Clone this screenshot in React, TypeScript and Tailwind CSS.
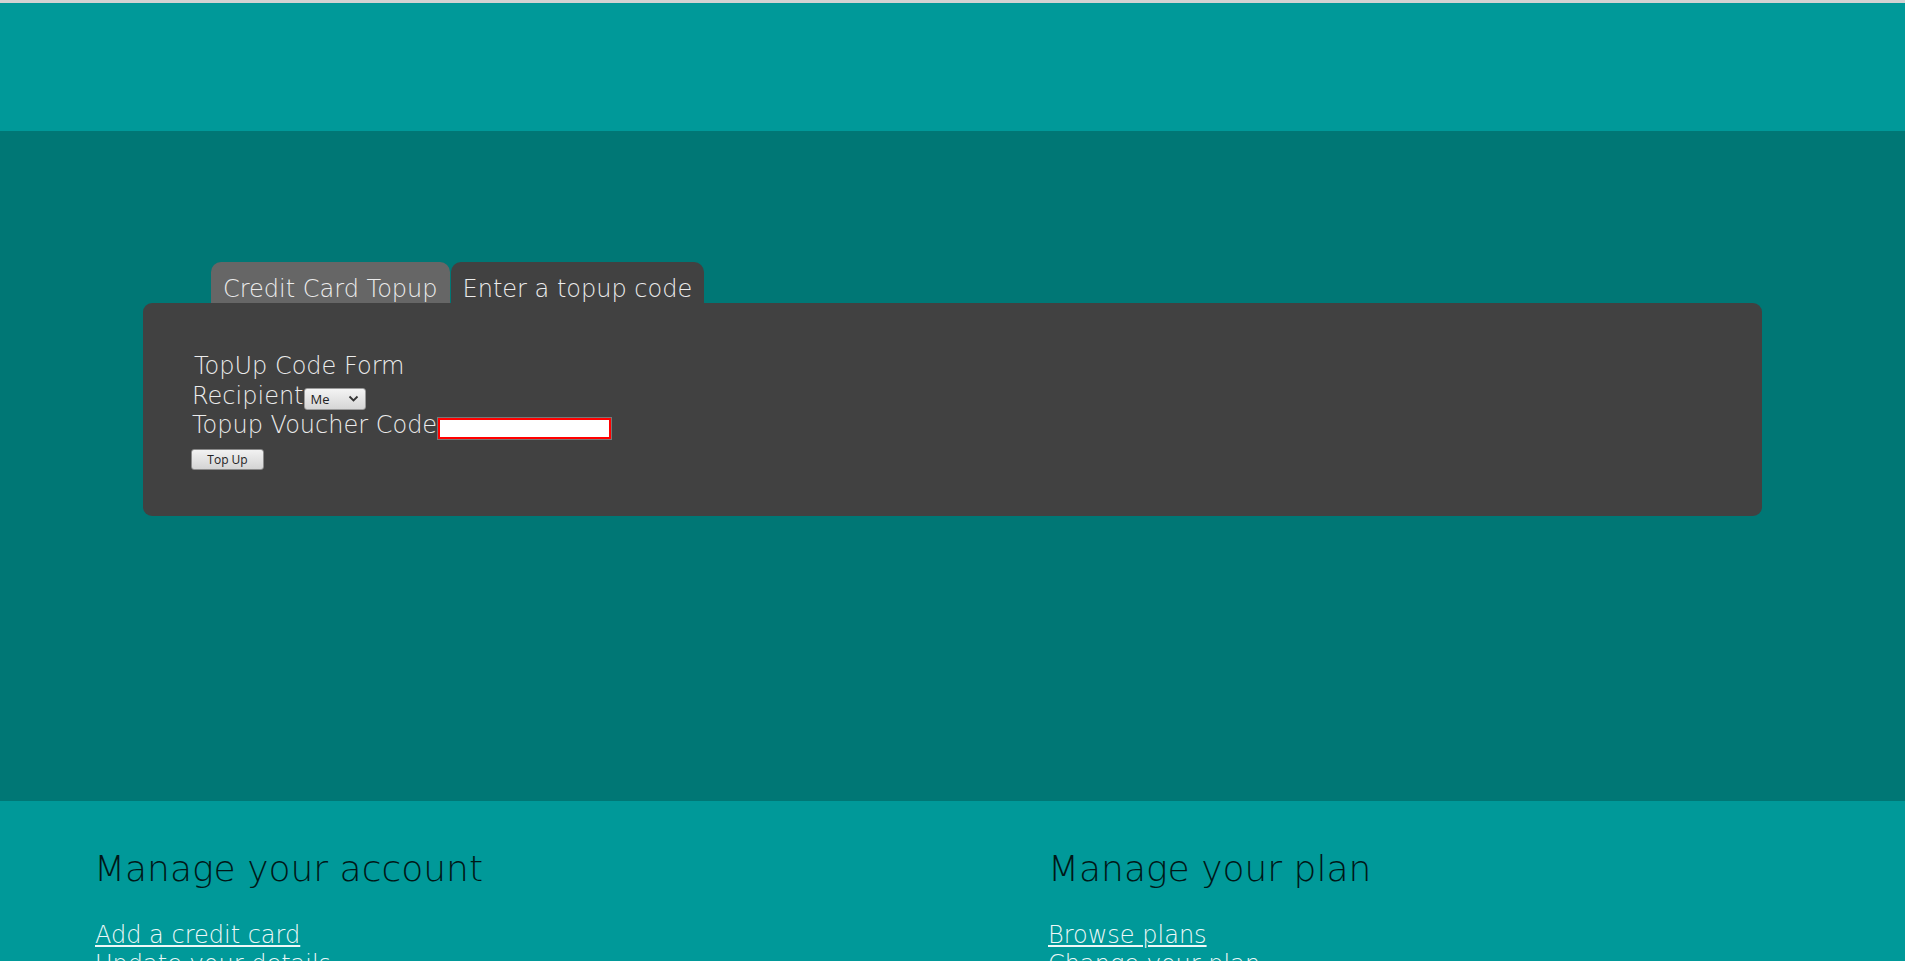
import React from "react";

export default function App() {
  const font = { fontFamily: '"DejaVu Sans", "Liberation Sans", sans-serif' };
  const ctrlFont = { fontFamily: '"Open Sans", "Liberation Sans", sans-serif' };
  return (
    <div className="h-screen overflow-hidden bg-[#009999] font-extralight" style={font}>
      <div className="h-[3px] bg-[#d3d3d3]" />
      <header className="h-[128px] bg-[#009999]" />
      <main className="h-[670px] bg-[#007775] pl-[143px] pr-[143px] pt-[131px]">
        <div className="flex gap-[1px] pl-[68px]">
          <div className="h-[41px] rounded-t-[10px] bg-[#666666] px-[12px] pt-[13px] text-[24px] leading-[28px] text-[#ececec]">
            Credit Card Topup
          </div>
          <div className="h-[41px] rounded-t-[10px] bg-[#414141] px-[12px] pt-[13px] text-[24px] leading-[28px] text-[#ececec]">
            Enter a topup code
          </div>
        </div>
        <div className="h-[213px] rounded-[9px] bg-[#414141] pl-[49px] pt-[49px] text-[24px] leading-[29px] text-[#ececec]">
          <div className="pl-[2px]">TopUp Code Form</div>
          <div className="flex h-[30px] items-end">
            <span>Recipient</span>
            <span className="relative mb-[1px] flex h-[22px] w-[62px] items-center rounded-[3px] border border-[#9a9a9a] bg-gradient-to-b from-[#f4f4f4] to-[#d6d6d6] pl-[6px] text-[13px] leading-none text-[#222] font-normal" style={ctrlFont}>
              Me
              <svg className="absolute right-[6px] top-[6px]" width="11" height="8" viewBox="0 0 11 8">
                <path d="M1.5 1.5 L5.5 5.5 L9.5 1.5" stroke="#333" strokeWidth="1.8" fill="none" />
              </svg>
            </span>
          </div>
          <div className="flex h-[29px] items-end">
            <span>Topup Voucher Code</span>
            <span className="h-[23px] w-[175px] border border-[#777] bg-white">
              <span className="block h-full w-full border-2 border-[#ff0000]" />
            </span>
          </div>
          <div className="mt-[9px] -ml-[1px]">
            <button className="flex h-[21px] w-[73px] items-center justify-center rounded-[3px] border border-[#8a8a8a] bg-gradient-to-b from-[#f2f2f2] to-[#d4d4d4] text-[12px] leading-none text-[#222] font-normal" style={ctrlFont}>
              Top Up
            </button>
          </div>
        </div>
      </main>
      <footer className="grid grid-cols-[957px_1fr] bg-[#009999] pl-[91px] pt-[46px]">
        <div>
          <h2 className="pl-[3px] text-[36px] leading-[44px] text-[#001818]">Manage your account</h2>
          <ul className="mt-[30px] pl-[4px] text-[24px] leading-[29px] text-[#eef8f8]">
            <li><a href="#" className="underline underline-offset-[2px]">Add a credit card</a></li>
            <li><a href="#">Update your details</a></li>
          </ul>
        </div>
        <div>
          <h2 className="text-[36px] leading-[44px] text-[#001818]">Manage your plan</h2>
          <ul className="mt-[30px] text-[24px] leading-[29px] text-[#eef8f8]">
            <li><a href="#" className="underline underline-offset-[2px]">Browse plans</a></li>
            <li><a href="#">Change your plan</a></li>
          </ul>
        </div>
      </footer>
    </div>
  );
}
